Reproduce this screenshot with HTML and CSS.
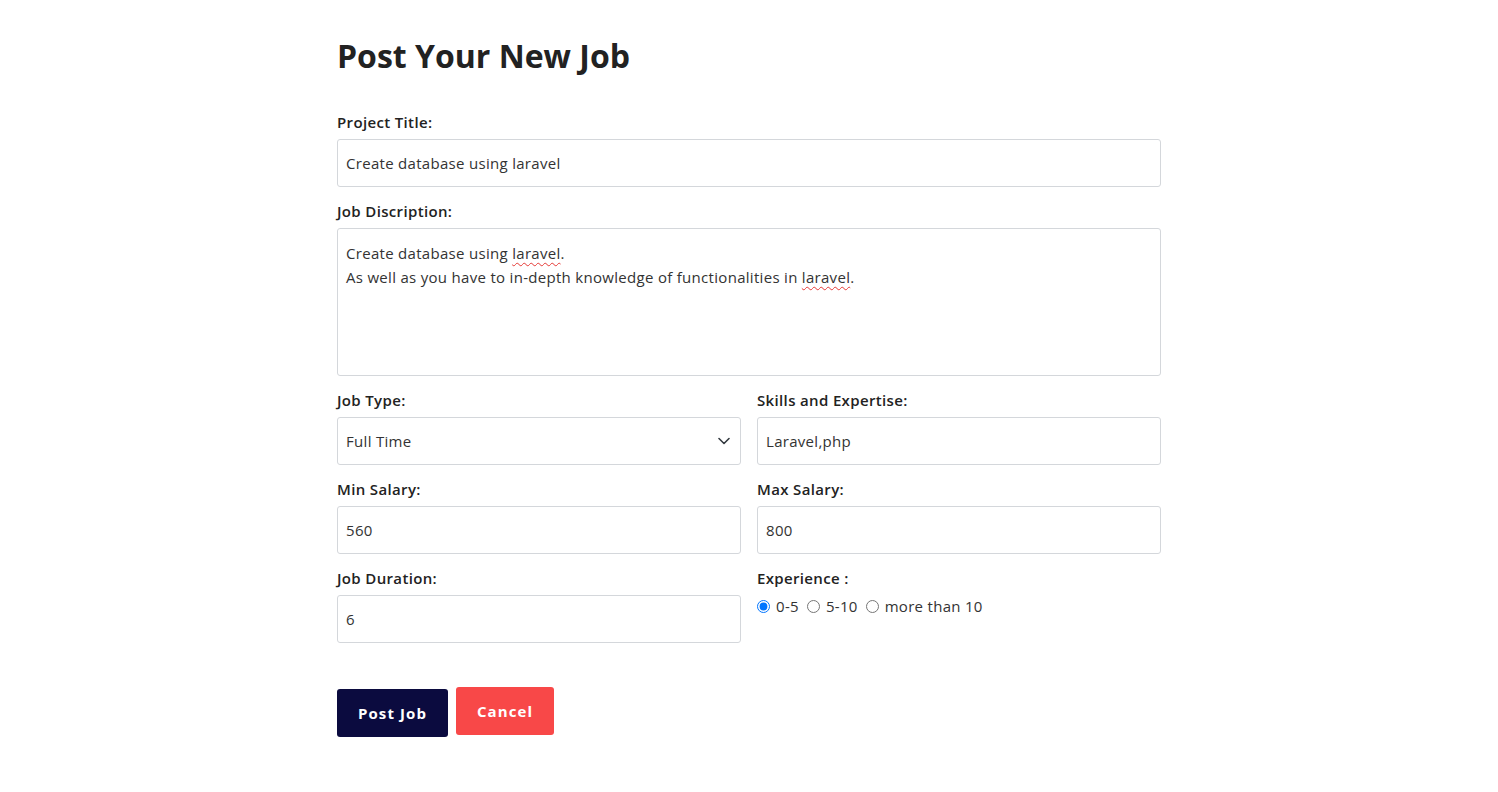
FILE: index.html
```html
<!DOCTYPE html>
<html lang="en">
<head>
<meta charset="utf-8">
<title>Post Your New Job</title>
<link rel="stylesheet" href="styles.css">
</head>
<body>
<main class="page">
  <h1 class="title">Post Your New Job</h1>
  <form class="form">
    <div class="field">
      <label class="label">Project Title:</label>
      <input class="control" type="text" value="Create database using laravel">
    </div>
    <div class="field">
      <label class="label">Job Discription:</label>
      <div class="control textarea">Create database using <span class="spell">laravel</span>.<br>As well as you have to in-depth knowledge of functionalities in <span class="spell">laravel</span>.</div>
    </div>
    <div class="row">
      <div class="field">
        <label class="label">Job Type:</label>
        <div class="select-wrap">
          <select class="control select">
            <option>Full Time</option>
            <option>Part Time</option>
          </select>
          <svg class="chevron" width="12" height="8" viewBox="0 0 12 8"><path d="M1 1.5 L6 6.5 L11 1.5" fill="none" stroke="#343a40" stroke-width="1.6" stroke-linecap="round" stroke-linejoin="round"/></svg>
        </div>
      </div>
      <div class="field">
        <label class="label">Skills and Expertise:</label>
        <input class="control" type="text" value="Laravel,php">
      </div>
    </div>
    <div class="row">
      <div class="field">
        <label class="label">Min Salary:</label>
        <input class="control" type="text" value="560">
      </div>
      <div class="field">
        <label class="label">Max Salary:</label>
        <input class="control" type="text" value="800">
      </div>
    </div>
    <div class="row">
      <div class="field">
        <label class="label">Job Duration:</label>
        <input class="control" type="text" value="6">
      </div>
      <div class="field">
        <label class="label">Experience :</label>
        <div class="radios">
          <label class="radio"><input type="radio" name="exp" checked> 0-5</label>
          <label class="radio"><input type="radio" name="exp"> 5-10</label>
          <label class="radio"><input type="radio" name="exp"> more than 10</label>
        </div>
      </div>
    </div>
    <div class="actions">
      <button type="button" class="btn btn-post">Post Job</button>
      <a class="btn btn-cancel">Cancel</a>
    </div>
  </form>
</main>
</body>
</html>
```
FILE: styles.css
```css
* { box-sizing: border-box; }
body {
  margin: 0;
  background: #fff;
  font-family: "Open Sans", "DejaVu Sans", sans-serif;
  color: #212529;
}
.page {
  width: 824px;
  margin: 0 auto;
  padding-top: 32px;
}
.title {
  margin: 0 0 31px;
  font-size: 32px;
  line-height: 48px;
  font-weight: 700;
  color: #222;
  letter-spacing: 0;
}
.form { display: flex; flex-direction: column; }
.field { display: flex; flex-direction: column; margin-bottom: 13px; }
.label {
  font-size: 15px;
  font-weight: 600;
  line-height: 22px;
  margin-bottom: 6px;
  color: #222;
  letter-spacing: 0.35px;
}
.control {
  display: block;
  width: 100%;
  height: 48px;
  border: 1px solid #d4d7db;
  border-radius: 3px;
  padding: 0 8px;
  font-family: inherit;
  font-size: 15px;
  letter-spacing: 0.3px;
  color: #333;
  background: #fff;
}
.textarea {
  height: 148px;
  padding: 12px 8px;
  line-height: 24px;
}
.spell {
  text-decoration: underline wavy #e53935;
  text-decoration-thickness: 1px;
  text-underline-offset: 3px;
}
.row {
  display: grid;
  grid-template-columns: 1fr 1fr;
  column-gap: 16px;
}
.select-wrap { position: relative; }
.select {
  appearance: none;
  -webkit-appearance: none;
  padding-right: 30px;
}
.chevron {
  position: absolute;
  right: 11px;
  top: 20px;
  pointer-events: none;
}
.radios {
  display: flex;
  align-items: center;
  gap: 8px;
  font-size: 15px;
  letter-spacing: 0.3px;
  color: #333;
  margin-top: 1px;
}
.radio { display: flex; align-items: center; gap: 6px; }
.radio input { margin: 0; width: 13px; height: 13px; }
.actions {
  display: flex;
  align-items: flex-start;
  gap: 8px;
  margin-top: 31px;
}
.btn {
  display: inline-flex;
  align-items: center;
  justify-content: center;
  height: 48px;
  border: none;
  border-radius: 3px;
  font-family: inherit;
  font-size: 15px;
  font-weight: 700;
  color: #fff;
  letter-spacing: 1.1px;
}
.btn-post {
  width: 111px;
  background: #0b0b3f;
  margin-top: 2px;
}
.btn-cancel {
  width: 98px;
  background: #f84848;
}
```
